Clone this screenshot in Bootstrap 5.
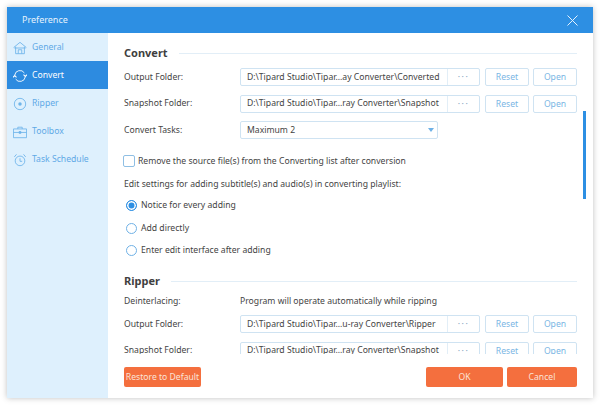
<!DOCTYPE html>
<html lang="en">
<head>
    <meta charset="UTF-8">
    <title>Preference</title>
    <link href="https://cdn.jsdelivr.net/npm/bootstrap@5.3.3/dist/css/bootstrap.min.css" rel="stylesheet">
    <style>
        html, body { height: 100%; }
        body {
            background: #fff;
            font-family: "Noto Sans", "DejaVu Sans", sans-serif;
            font-size: 8.65px;
            color: #444;
            padding: 7px;
            overflow: hidden;
        }
        .pref-window { width: 586px; height: 391px; background: #fff; box-shadow: 0 0 6px rgba(0,0,0,.25); position: relative; }
        .pref-title { height: 26px; background: #2d8fe3; color: #e6f2fc; padding: 0 15px 0 15px; flex: none; font-size: 9px; }
        .pref-side { width: 101px; flex: none; background: #def0fd; }
        .side-item { height: 28px; padding: 1px 0 0 6px; gap: 5px; color: #5fa9e6; }
        .side-item.is-active { background: #2d8be0; color: #fff; }
        .side-item svg { width: 14px; height: 14px; flex: none; }
        .pref-scroll { height: 321px; overflow: hidden; padding: 11px 16px 0 16px; }
        .sect-head { font-weight: 700; font-size: 11px; color: #3f3f3f; height: 18px; gap: 11px; }
        .sect-head::after { content: ""; flex: 1; height: 1px; background: #e2eef7; }
        .pref-row { height: 18px; margin-bottom: 8.5px; }
        .line-row { height: 14px; }
        .pref-label { width: 116px; flex: none; }
        .path-box { width: 240px; height: 18px; border: 1px solid #cfe3f2; border-radius: 2px; margin-right: 5px; }
        .path-text { flex: 1; min-width: 0; padding-left: 6px; color: #444; white-space: nowrap; overflow: hidden; }
        .path-dots { width: 32px; flex: none; border-left: 1px solid #e2eef7; color: #86a6bf; letter-spacing: 1.5px; text-align: center; height: 100%; line-height: 16px; }
        .ghost-btn { height: 18px; border: 1px solid #cfe3f2; border-radius: 2px; color: #7ab6e4; width: 44px; text-align: center; line-height: 16px; margin-right: 4px; }
        .ghost-btn:last-child { margin-right: 0; }
        .task-select { width: 198px; height: 18px; border: 1px solid #cfe3f2; border-radius: 2px; padding: 0 3px 0 6px; }
        .task-caret { width: 0; height: 0; border-left: 3.5px solid transparent; border-right: 3.5px solid transparent; border-top: 4px solid #6fb1e6; }
        .box-check { width: 12px; height: 12px; border: 1px solid #8fbfe4; border-radius: 2px; flex: none; margin-left: -1px; margin-right: 3px; }
        .radio-dot { width: 11px; height: 11px; border: 1px solid #6fb1e6; border-radius: 50%; flex: none; margin: 0 4px 0 2px; }
        .radio-dot.is-on { border-color: #2d8fe3; box-shadow: inset 0 0 0 1.5px #fff; background: #2d8fe3; }
        .gap-first { margin-top: 6px; }
        .gap-check { margin-top: 15px; }
        .gap-edit { margin-top: 9.5px; }
        .gap-r1 { margin-top: 7px; }
        .gap-r2 { margin-top: 8.5px; }
        .gap-r3 { margin-top: 8px; }
        .gap-ripper { margin-top: 15px; }
        .gap-dein { margin-top: 4px; }
        .gap-out { margin-top: 7px; }
        .pref-foot { height: 44px; padding: 2px 16px 0; }
        .solid-btn { background: #f46f3e; color: #fbe3d8; border-radius: 2px; height: 20px; line-height: 20px; text-align: center; }
        .btn-restore { width: 77px; }
        .btn-ok { width: 77px; margin-left: auto; }
        .btn-cancel { width: 70px; margin-left: 4px; }
        .scroll-thumb { position: absolute; left: 576px; top: 104px; width: 3px; height: 88px; background: #2d8fe3; }
    </style>
</head>
<body>
    <div class="pref-window d-flex flex-column">
        <div class="pref-title d-flex align-items-center justify-content-between">
            <span>Preference</span>
            <svg width="11" height="11" viewBox="0 0 11 11"><path d="M.5.5l10 10M10.5.5l-10 10" stroke="#e6f2fc" fill="none"/></svg>
        </div>
        <div class="d-flex flex-grow-1">
            <div class="pref-side">
                <div class="side-item d-flex align-items-center">
                    <svg viewBox="0 0 16 16" fill="none" stroke="#6fb5ea"><path d="M.7 7.500 8 1.500l7.300 6M3 6.500v8h10v-8M6 14.500v-4.500h4v4.500M1.500 8h13"/></svg>General
                </div>
                <div class="side-item is-active d-flex align-items-center">
                    <svg viewBox="0 0 16 16" fill="none" stroke="#fff"><path d="M2 7A6 6 0 0 1 13 4.500M14 9A6 6 0 0 1 3 11.500"/><path d="M0 9.500l2-2 2 2M12 6.500l2 2 2-2" stroke-width="1.200"/></svg>Convert
                </div>
                <div class="side-item d-flex align-items-center">
                    <svg viewBox="0 0 16 16" fill="none" stroke="#6fb5ea"><circle cx="8" cy="8" r="6.500"/><circle cx="8" cy="8" r="2" fill="#6fb5ea" stroke="none"/></svg>Ripper
                </div>
                <div class="side-item d-flex align-items-center">
                    <svg viewBox="0 0 16 16" fill="none" stroke="#6fb5ea"><path d="M.5 4.500h15v10H.5zM.5 8.500h15M5.500 4.500v-2h5v2"/><path d="M7 7.500h2v2H7z" fill="#6fb5ea"/></svg>Toolbox
                </div>
                <div class="side-item d-flex align-items-center">
                    <svg viewBox="0 0 16 16" fill="none" stroke="#6fb5ea"><circle cx="8" cy="9" r="5.500"/><path d="M8 6v3.500h2.500M1.500 4.500l2.500-3M14.500 4.500l-2.500-3"/></svg>Task Schedule
                </div>
            </div>
            <div class="flex-grow-1 d-flex flex-column">
                <div class="pref-scroll">
                    <div class="sect-head d-flex align-items-center">Convert</div>
                    <div class="pref-row gap-first d-flex align-items-center">
                        <div class="pref-label">Output Folder:</div>
                        <div class="path-box d-flex align-items-center">
                            <div class="path-text">D:\Tipard Studio\Tipar...ay Converter\Converted</div><div class="path-dots">···</div>
                        </div>
                        <div class="ghost-btn">Reset</div>
                        <div class="ghost-btn">Open</div>
                    </div>
                    <div class="pref-row d-flex align-items-center">
                        <div class="pref-label">Snapshot Folder:</div>
                        <div class="path-box d-flex align-items-center">
                            <div class="path-text">D:\Tipard Studio\Tipar...ray Converter\Snapshot</div><div class="path-dots">···</div>
                        </div>
                        <div class="ghost-btn">Reset</div>
                        <div class="ghost-btn">Open</div>
                    </div>
                    <div class="pref-row d-flex align-items-center">
                        <div class="pref-label">Convert Tasks:</div>
                        <div class="task-select d-flex align-items-center justify-content-between"><span>Maximum 2</span><span class="task-caret"></span></div>
                    </div>
                    <div class="line-row gap-check d-flex align-items-center"><span class="box-check"></span>Remove the source file(s) from the Converting list after conversion</div>
                    <div class="line-row gap-edit d-flex align-items-center">Edit settings for adding subtitle(s) and audio(s) in converting playlist:</div>
                    <div class="line-row gap-r1 d-flex align-items-center"><span class="radio-dot is-on"></span>Notice for every adding</div>
                    <div class="line-row gap-r2 d-flex align-items-center"><span class="radio-dot"></span>Add directly</div>
                    <div class="line-row gap-r3 d-flex align-items-center"><span class="radio-dot"></span>Enter edit interface after adding</div>
                    <div class="sect-head gap-ripper d-flex align-items-center">Ripper</div>
                    <div class="line-row gap-dein d-flex align-items-center">
                        <div class="pref-label">Deinterlacing:</div>
                        <div>Program will operate automatically while ripping</div>
                    </div>
                    <div class="pref-row gap-out d-flex align-items-center">
                        <div class="pref-label">Output Folder:</div>
                        <div class="path-box d-flex align-items-center">
                            <div class="path-text">D:\Tipard Studio\Tipar...u-ray Converter\Ripper</div><div class="path-dots">···</div>
                        </div>
                        <div class="ghost-btn">Reset</div>
                        <div class="ghost-btn">Open</div>
                    </div>
                    <div class="pref-row d-flex align-items-center">
                        <div class="pref-label">Snapshot Folder:</div>
                        <div class="path-box d-flex align-items-center">
                            <div class="path-text">D:\Tipard Studio\Tipar...ray Converter\Snapshot</div><div class="path-dots">···</div>
                        </div>
                        <div class="ghost-btn">Reset</div>
                        <div class="ghost-btn">Open</div>
                    </div>
                </div>
                <div class="pref-foot d-flex align-items-center">
                    <div class="solid-btn btn-restore">Restore to Default</div>
                    <div class="solid-btn btn-ok">OK</div>
                    <div class="solid-btn btn-cancel">Cancel</div>
                </div>
            </div>
        </div>
        <div class="scroll-thumb"></div>
    </div>
    <script src="https://cdn.jsdelivr.net/npm/bootstrap@5.3.3/dist/js/bootstrap.bundle.min.js"></script>
</body>
</html>
